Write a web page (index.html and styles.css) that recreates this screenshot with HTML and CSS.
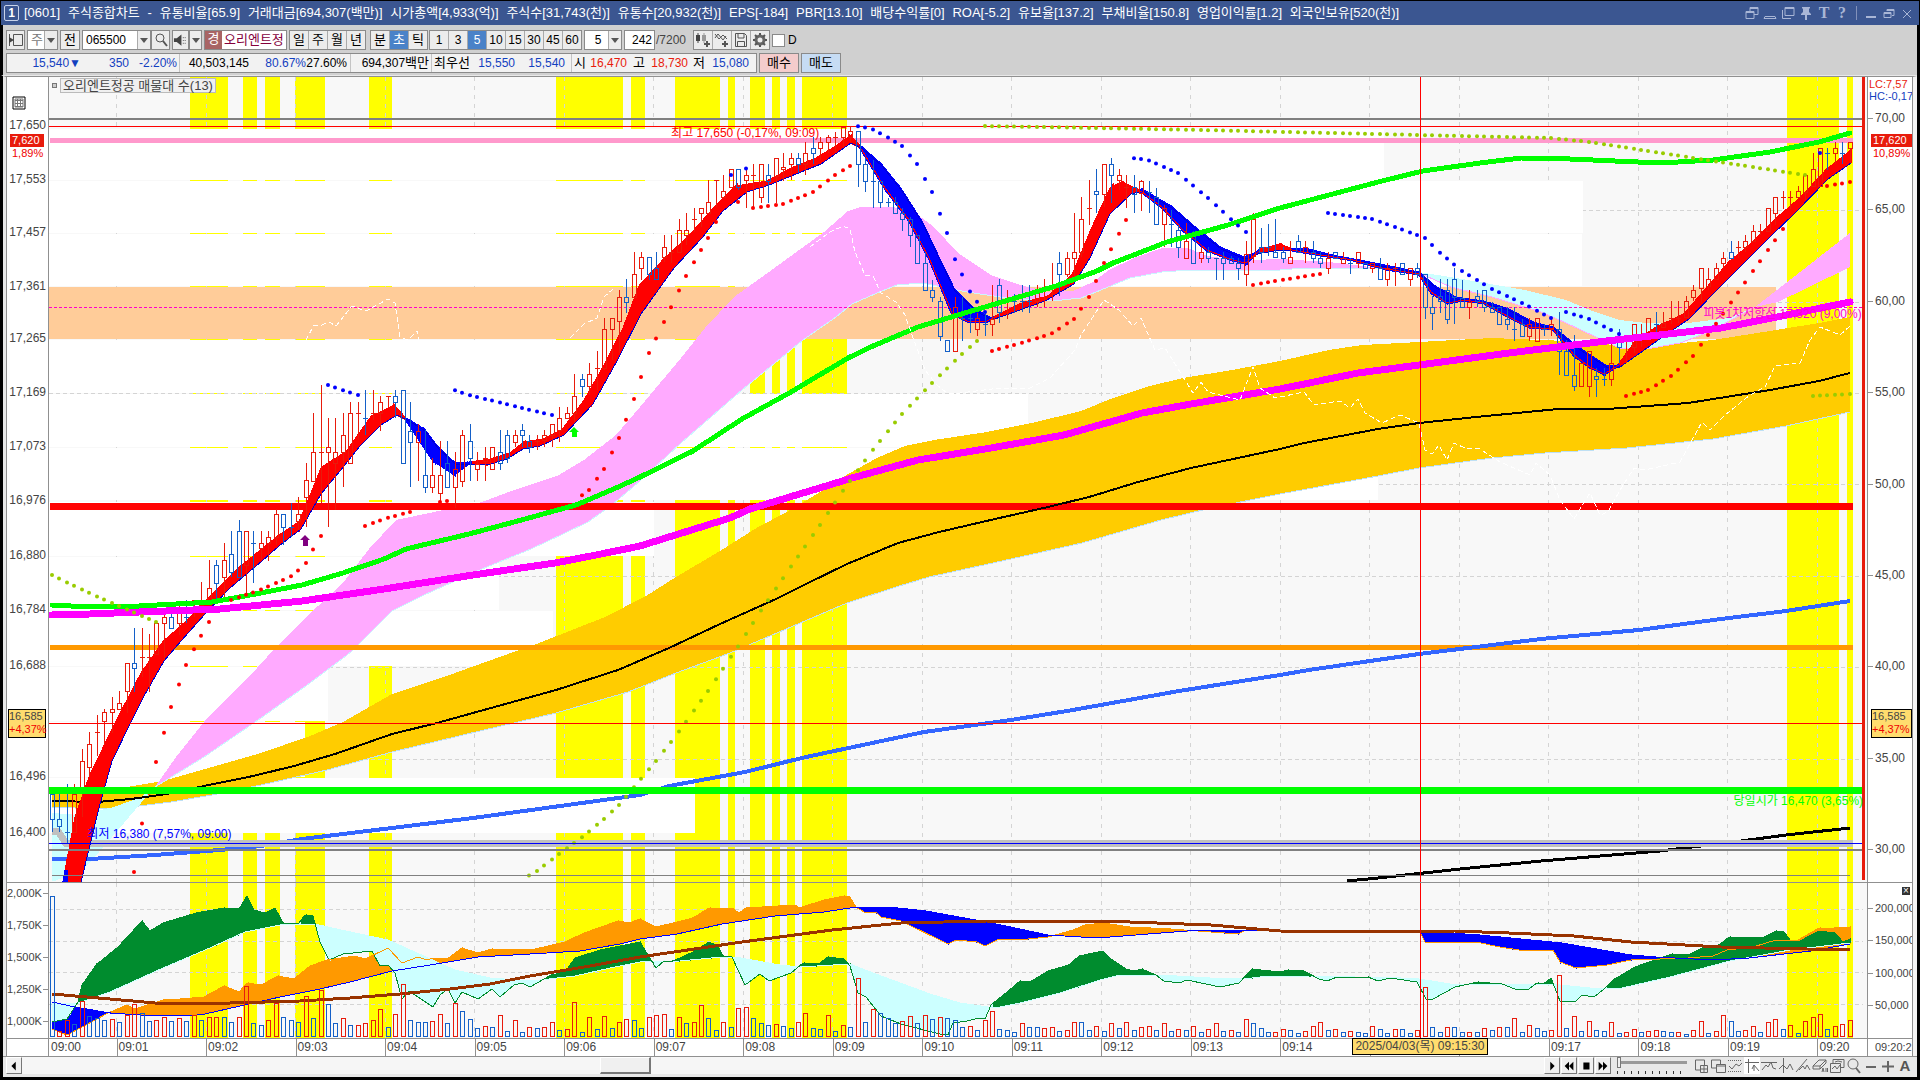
FILE: index.html
```html
<!DOCTYPE html>
<html lang="ko">
<head>
<meta charset="utf-8">
<title>[0601] 주식종합차트</title>
<link rel="stylesheet" href="styles.css">
</head>
<body>
<div class="window">
  <header class="titlebar">
    <span class="win-no">1</span>
    <h1 class="title"><span>[0601]</span><span>주식종합차트</span><span>-</span><span>유통비율[65.9]</span><span>거래대금[694,307(백만)]</span><span>시가총액[4,933(억)]</span><span>주식수[31,743(천)]</span><span>유통수[20,932(천)]</span><span>EPS[-184]</span><span>PBR[13.10]</span><span>배당수익률[0]</span><span>ROA[-5.2]</span><span>유보율[137.2]</span><span>부채비율[150.8]</span><span>영업이익률[1.2]</span><span>외국인보유[520(천)]</span></h1>
    <div class="win-tools">
      <button aria-label="화면 분리"><svg viewBox="0 0 14 14"><path d="M5 1.500h8v7H9M5 1.500V5M1 5.500h8v7H1z" /><path d="M5 2.500h8M1 6.500h8"/></svg></button>
      <button aria-label="접기"><svg viewBox="0 0 14 14"><path d="M2 10.500h10l1 2H1z"/></svg></button>
      <button aria-label="복사"><svg viewBox="0 0 14 14"><path d="M4 1.500h9v8H4zM1.500 4v8.500H10M4 2.500h9"/></svg></button>
      <button aria-label="고정"><svg viewBox="0 0 14 14"><path class="solid" d="M3 1h8v1l-1 1v3l2 2v1H8v5H6V9H2V8l2-2V3L3 2z"/></svg></button>
      <button aria-label="글자">T</button>
      <button aria-label="도움말">?</button>
      <i class="bar"></i>
      <button aria-label="최소화"><svg viewBox="0 0 14 14"><path class="solid" d="M2 10h10v2H2z"/></svg></button>
      <button aria-label="이전 크기"><svg viewBox="0 0 14 14"><path d="M5 5V3.500h7v6H10M2 6.500h7v5H2zM2 7.500h7M5 4.500h7"/></svg></button>
      <button aria-label="닫기"><svg viewBox="0 0 14 14"><path d="M3 4l8 8M11 4l-8 8"/></svg></button>
    </div>
  </header>

  <section class="toolbar">
    <form class="row">
      <button type="button" class="btn w19" aria-label="메뉴"><svg viewBox="0 0 16 16"><path d="M5.500 2.500h9v11h-9zM5.500 5v6M1.500 2v4M1.500 10v4"/><path class="solid" d="M1 5l5 3-5 3z"/></svg></button>
      <label class="combo w31 dim">주<button type="button" class="drop" aria-label="종류"></button></label>
      <button type="button" class="btn w20">전</button>
      <div class="pair">
        <div class="combo w69"><input class="code" value="065500" aria-label="종목코드"><button type="button" class="drop" aria-label="최근 종목"></button></div>
        <button type="button" class="btn w19" aria-label="검색"><svg viewBox="0 0 16 16"><circle cx="7" cy="6" r="4"/><path class="thick" d="M10 9l4 5"/></svg></button>
      </div>
      <div class="pair">
        <button type="button" class="btn w17" aria-label="소리"><svg viewBox="0 0 16 16"><path class="solid" d="M1 6h3l5-4v12L4 10H1z"/><path d="M11 5v1M11 8v1M11 11v1M13 5v1M13 8v1M13 11v1"/></svg></button>
        <button type="button" class="drop tall" aria-label="소리 설정"></button>
      </div>
      <div class="stock"><b>경</b><span>오리엔트정</span></div>
      <div class="seg gap-r"><button type="button">일</button><button type="button">주</button><button type="button">월</button><button type="button">년</button></div>
      <div class="seg"><button type="button">분</button><button type="button" class="on">초</button><button type="button">틱</button></div>
      <div class="seg num"><button type="button">1</button><button type="button">3</button><button type="button" class="on">5</button><button type="button">10</button><button type="button">15</button><button type="button">30</button><button type="button">45</button><button type="button">60</button></div>
      <div class="combo w38"><input class="mid" value="5" aria-label="간격"><button type="button" class="drop" aria-label="간격 선택"></button></div>
      <div class="pair"><div class="combo w31"><input class="end" value="242" aria-label="표시 봉수"></div><span class="total">/7200</span></div>
      <div class="seg ico">
        <button type="button" aria-label="지표 추가"><svg viewBox="0 0 16 16"><path class="solid" d="M1 3h4v6H1zM2.500 1h1v10h-1z"/><path class="pale" d="M7 3h4v6H7zM8.500 1h1v10h-1z"/><path class="thick" d="M12 9v6M9 12h6"/></svg></button>
        <button type="button" aria-label="비교"><svg viewBox="0 0 16 16"><path class="thin" d="M1 6l3-4 5 6 3-4M1 2l4 5 4-4 4 4"/><path class="thick" d="M11 9v6M8 12h6"/></svg></button>
        <button type="button" aria-label="저장"><svg viewBox="0 0 16 16"><path d="M2.500 1.500h9l2 2v11h-11zM5 2v4h6V2M4.500 14V9.500h7V14"/></svg></button>
        <button type="button" aria-label="설정"><svg viewBox="0 0 16 16"><circle class="gear" cx="8" cy="8" r="4"/><path class="thick" d="M8 1v2M8 13v2M1 8h2M13 8h2M3 3l2 2M11 11l2 2M13 3l-2 2M3 13l2-2"/></svg></button>
      </div>
      <label class="check"><input type="checkbox">D</label>
    </form>
    <div class="row">
      <div class="quote">
        <div class="cell c1"><span class="dn">15,540▼</span><span class="dn">350</span><span class="dn">-2.20%</span></div>
        <div class="cell c2"><span>40,503,145</span><span class="dn">80.67%</span><span>27.60%</span></div>
        <div class="cell c3"><span>694,307<i>백만</i></span></div>
        <div class="cell c4"><i>최우선</i><span class="dn">15,550</span><span class="dn">15,540</span></div>
        <div class="cell c5"><i>시</i><span class="up">16,470</span><i>고</i><span class="up">18,730</span><i>저</i><span class="dn">15,080</span></div>
      </div>
      <button class="order buy">매수</button>
      <button class="order sell">매도</button>
    </div>
  </section>

  <main class="chart">
    <div class="axis left price">
      <span class="lab"></span><span class="lab">17,650</span><span class="lab">17,553</span><span class="lab">17,457</span><span class="lab">17,361</span><span class="lab">17,265</span><span class="lab">17,169</span><span class="lab">17,073</span><span class="lab">16,976</span><span class="lab">16,880</span><span class="lab">16,784</span><span class="lab">16,688</span><span class="lab"></span><span class="lab">16,496</span><span class="lab">16,400</span>
      <svg class="gridicon" viewBox="0 0 14 14"><path d="M1 1h12v12H1z"/><path class="in" d="M3 4.500h8M3 7.500h8M3 10.500h8M5.500 3v8M8.500 3v8M3 3h8v8H3z"/></svg>
      <div class="tag now"><b>7,620</b><em>1,89%</em></div>
      <div class="tag cross"><b>16,585</b><em>+4,37%</em></div>
    </div>
    <div class="plot top">
      <svg id="main" viewBox="49 77 1818 805" preserveAspectRatio="none"></svg>
      <span class="legend"><i></i><b>오리엔트정공 매물대 수(13)</b></span>
      <span class="note high">최고 17,650 (-0,17%, 09:09)</span>
      <span class="note low">최저 16,380 (7,57%, 09:00)</span>
      <span class="note pivot">피봇1차저항선 17,320 (9,00%)</span>
      <span class="note open">당일시가 16,470 (3,65%)</span>
    </div>
    <div class="axis right pct">
      <span class="lab"></span><span class="lab">70,00</span><span class="lab">65,00</span><span class="lab">60,00</span><span class="lab">55,00</span><span class="lab">50,00</span><span class="lab">45,00</span><span class="lab">40,00</span><span class="lab">35,00</span><span class="lab">30,00</span>
      <div class="lchc"><span class="up">LC:7,57</span><span class="dn">HC:-0,17</span></div>
      <div class="tag now"><b>17,620</b><em>10,89%</em></div>
      <div class="tag cross"><b>16,585</b><em>+4,37%</em></div>
    </div>

    <div class="axis left vol line">
      <span class="lab"></span><span class="lab">2,000K</span><span class="lab">1,750K</span><span class="lab">1,500K</span><span class="lab">1,250K</span><span class="lab">1,000K</span>
    </div>
    <div class="plot line"><svg id="sub" viewBox="49 883 1818 155" preserveAspectRatio="none"></svg></div>
    <div class="axis right qty line">
      <span class="lab"></span><span class="lab">200,000</span><span class="lab">150,000</span><span class="lab">100,000</span><span class="lab">50,000</span>
      <button class="close" aria-label="지표 닫기">×</button>
    </div>

    <div class="axis left line"></div>
    <div class="times line">
      <span>09:00</span><span>09:01</span><span>09:02</span><span>09:03</span><span>09:04</span><span>09:05</span><span>09:06</span><span>09:07</span><span>09:08</span><span>09:09</span><span>09:10</span><span>09:11</span><span>09:12</span><span>09:13</span><span>09:14</span><span></span><span></span><span>09:17</span><span>09:18</span><span>09:19</span><span>09:20</span>
      <b class="stamp">2025/04/03(목) 09:15:30</b>
    </div>
    <div class="axis right line last">09:20:2</div>
  </main>

  <footer class="scroll">
    <button class="sb" aria-label="왼쪽으로"><svg viewBox="0 0 16 16"><path d="M10 3v10L5 8z"/></svg></button>
    <div class="track"><i class="thumb"></i></div>
    <div class="player">
      <button class="sb" aria-label="재생"><svg viewBox="0 0 16 16"><path d="M6 3v10l5-5z"/></svg></button>
      <button class="sb" aria-label="뒤로"><svg viewBox="0 0 16 16"><path d="M8 3v10L3 8zM13 3v10L8 8z"/></svg></button>
      <button class="sb" aria-label="정지"><svg viewBox="0 0 16 16"><path d="M5 4h7v8H5z"/></svg></button>
      <button class="sb" aria-label="앞으로"><svg viewBox="0 0 16 16"><path d="M3 3v10l5-5zM8 3v10l5-5z"/></svg></button>
    </div>
    <label class="speed"><input type="range" min="0" max="10" value="0" aria-label="속도"></label>
    <div class="tools">
      <button aria-label="창 추가"><svg viewBox="0 0 16 16"><path d="M8 12H2.500v-10h9v5M7.500 7.500h7v7h-7zM11 8v6M8 11h6"/></svg></button>
      <button aria-label="겹치기"><svg viewBox="0 0 16 16"><path d="M6 10H1.500v-8h9v4M6.500 6.500h9v8h-9zM6.500 8h9"/></svg></button>
      <button aria-label="구간"><svg viewBox="0 0 16 16"><path class="dot" d="M1 2.500h14M1 13.500h14"/><path d="M2 8l3 3 4-5 3 2 3-3"/></svg></button>
      <button aria-label="십자선" class="sel"><svg viewBox="0 0 16 16"><path d="M4.500 1v14M1 4.500h14M8 11l2-4 5 6M10 7v6"/></svg></button>
      <button aria-label="수평선"><svg viewBox="0 0 16 16"><path d="M0 4.500h16M1 12l4-5 2 2 3-5 2 6 3 1"/></svg></button>
      <button aria-label="수직선"><svg viewBox="0 0 16 16"><path d="M5.500 0v15M1 11l4-4 4 4 3-5 3 6"/></svg></button>
      <button aria-label="추세선"><svg viewBox="0 0 16 16"><path d="M1 14L12 1M4 12l4-4 2 3 2-4 3 5"/></svg></button>
      <button aria-label="전체 지우기"><svg viewBox="0 0 16 16"><path d="M1 8l6-6h7v3l-6 6H1zM1 8h7l6-6M8 8v3M10 14l1-4 1 4M14 10v4M15.500 10v4"/></svg></button>
      <button aria-label="차트 복사"><svg viewBox="0 0 16 16"><path d="M4 5V1.500h11v8h-3M1.500 5.500h10v9h-10zM3 11l3-3 2 3 3-4M6 4l3-1 4 1"/></svg></button>
      <button aria-label="돋보기"><svg viewBox="0 0 16 16"><circle cx="7" cy="6" r="5"/><path class="fat" d="M10 10l4 5"/></svg></button>
      <button aria-label="축소"><svg viewBox="0 0 16 16"><path class="fat" d="M3 9h10"/></svg></button>
      <button aria-label="확대"><svg viewBox="0 0 16 16"><path class="fat" d="M2 8.500h12M8 3v11"/></svg></button>
      <button aria-label="자동" class="a">A</button>
    </div>
  </footer>
</div>
<script src="chart.js"></script>
</body>
</html>
```
FILE: styles.css
```css
* { box-sizing: border-box; }
body {
  margin: 0;
  background: #000;
  color: #000;
  font: 12px/16px "Liberation Sans", "Noto Sans CJK KR", sans-serif;
}
button, input { font: inherit; color: inherit; padding: 0; margin: 0; border: 0; background: none; border-radius: 0; }
i, em { font-style: normal; }
svg { display: block; }
.up { color: #e81b0c; }
.dn { color: #1240c0; }

.window { min-height: 100vh; display: flex; flex-direction: column; padding: 1px 3px 3px 1px; }

/* title bar */
.titlebar { height: 24px; margin-right: -2px; background: #3b5691; color: #fff; display: flex; align-items: center; padding: 0 5px 0 3px; }
.win-no { width: 15px; height: 16px; border: 1px solid #c9d3ea; border-radius: 2px; font-weight: bold; line-height: 14px; text-align: center; }
.title { margin: 0 0 0 5px; width: 72%; font-weight: 400; font-size: 13px; display: flex; justify-content: space-between; white-space: nowrap; }
.win-tools { margin-left: auto; display: flex; align-items: center; gap: 4px; color: #a9b6d6; }
.win-tools button { width: 14px; font: bold 16px/16px "Liberation Serif", serif; }
.win-tools svg { width: 14px; height: 14px; fill: none; stroke: #a9b6d6; }
.win-tools .solid { fill: #a9b6d6; stroke: none; }
.win-tools .bar { width: 1px; height: 14px; margin: 0 3px; background: #8291ba; }

/* toolbar */
.toolbar { height: 51px; background: #d0d0d0; border-left: 2px solid #000; padding: 5px 0 0 3px; display: flex; flex-direction: column; gap: 3px; border-bottom: 1px solid #e8e8e8; }
.row { display: flex; height: 20px; gap: 2px; align-items: stretch; margin: 0; white-space: nowrap; font-size: 13px; }
.pair { display: flex; }
.btn, .seg, .combo, .stock { border: 1px solid #8a8a8a; background: #ececec; }
.btn { display: flex; align-items: center; justify-content: center; }
.btn svg, .ico svg { width: 16px; height: 16px; fill: none; stroke: #555; }
.btn .solid, .ico .solid { fill: #444; stroke: none; }
.ico .pale { fill: #999; stroke: none; }
.btn .thick, .ico .thick { stroke-width: 2; }
.ico .gear { stroke-width: 3; stroke: #666; }
.w17 { width: 17px; } .w19 { width: 19px; } .w20 { width: 20px; } .w31 { width: 31px; } .w38 { width: 38px; } .w69 { width: 69px; }
.combo { background: #fff; display: flex; align-items: center; padding-left: 3px; }
.combo input { flex: 1; min-width: 0; width: 10px; font-size: 12px; outline: 0; }
.combo input.mid { text-align: center; }
.combo input.end { text-align: right; padding-right: 2px; }
.dim { color: #777; }
.drop { width: 13px; height: 18px; margin-left: auto; background: #ececec; border-left: 1px solid #aaa; display: flex; align-items: center; justify-content: center; flex: none; }
.drop::before { content: ""; border: 4px solid transparent; border-top: 5px solid #555; border-bottom: 0; }
.drop.tall { height: 20px; border: 1px solid #8a8a8a; }
.stock { width: 83px; display: flex; background: #fff; color: #85003c; align-items: center; overflow: hidden; }
.stock b { width: 17px; height: 18px; background: #a86464; color: #fff; font-weight: 400; text-align: center; margin-right: 2px; flex: none; }
.seg { display: flex; }
.seg button { width: 19px; border-left: 1px solid #aaa; display: flex; align-items: center; justify-content: center; }
.seg button:first-child { border-left: 0; width: 18px; }
.seg .on { background: #4a82c8; color: #fff; }
.gap-r { margin-right: 2px; }
.num { font-size: 12px; margin-left: -1px; }
.total { width: 36px; line-height: 20px; font-size: 12px; color: #444; padding-left: 1px; }
.check { display: flex; align-items: center; gap: 3px; font-size: 12px; }
.check input { appearance: none; width: 13px; height: 13px; background: #fff; border: 1px solid #8a8a8a; }

.quote { width: 751px; border: 1px solid #8a8a8a; background: #f2f2f2; display: flex; font-size: 12px; line-height: 18px; }
.quote i { font-size: 13px; }
.cell { display: grid; border-left: 1px solid #c4c4c4; justify-items: end; }
.cell:first-child { border-left: 0; }
.c1 { grid-template-columns: 74px 48px 48px; width: 172px; }
.c2 { grid-template-columns: 69px 57px 41px; width: 171px; }
.c3 { grid-template-columns: 78px; width: 81px; }
.c4 { grid-template-columns: 38px 45px 50px; width: 140px; }
.c5 { grid-template-columns: 14px 41px 18px 43px 17px 44px; width: 184px; }
.order { width: 40px; border: 1px solid #8a8a8a; }
.buy { background: #f4cccc; }
.sell { background: #c6dcf4; }

/* chart */
.chart { flex: 1; margin-left: 2px; border-left: 3px solid #e8e8e8; border-right: 4px solid #f4f4f4; border-top: 1px solid #909090; display: grid; grid-template-columns: 43px minmax(0, 1fr) 46px; grid-template-rows: 805fr 156fr 18px; background: #fff; color: #444; }
.plot { position: relative; min-height: 0; }
.plot svg { position: absolute; inset: 0; width: 100%; height: 100%; }
.line { border-top: 1px solid #909090; }
.axis { position: relative; display: grid; overflow: hidden; min-height: 0; }
.left { border-left: 1px solid #909090; border-right: 1px solid #909090; }
.right { border-left: 1px solid #909090; border-right: 1px solid #909090; }
.lab { height: 16px; margin-top: -9px; }
.left .lab { text-align: right; padding-right: 2px; }
.right .lab { padding-left: 7px; position: relative; }
.right .lab::before { content: ""; position: absolute; left: 0; top: 8px; width: 5px; height: 1px; background: #909090; }
.right .lab:first-child::before { display: none; }
.price { grid-template-rows: 49fr 54fr 53fr 54fr 52fr 54fr 54fr 54fr 55fr 54fr 56fr 55fr 56fr 56fr 49fr; }
.pct { grid-template-rows: 210fr repeat(8, 457fr) 159fr; }
.vol { grid-template-rows: 11fr repeat(4, 32fr) 16fr; font-size: 11px; }
.vol .lab { padding-right: 7px; position: relative; }
.vol .lab::before { content: ""; position: absolute; right: 0; top: 8px; width: 6px; height: 1px; background: #909090; }
.vol .lab:first-child::before { display: none; }
.qty { grid-template-rows: 26fr repeat(4, 32fr); font-size: 11px; }
.gridicon { position: absolute; left: 5px; top: 19px; width: 14px; height: 14px; fill: none; stroke: #000; stroke-width: 1; }
.gridicon .in { stroke: #777; }
.tag { position: absolute; font-size: 11px; line-height: 13px; }
.tag b, .tag em { display: block; font-weight: 400; padding-left: 2px; }
.tag em { color: #f00000; }
.now { top: 7%; margin-top: 1px; left: 3px; width: 34px; }
.right .now { width: 41px; }
.now b { background: #e81b0c; color: #fff; }
.cross { top: 79%; margin-top: -4px; left: 1px; width: 38px; height: 29px; border: 1px solid #000; background: #ffdc6e; }
.right .cross { left: 3px; width: 41px; }
.cross b, .cross em { padding-left: 0; }
.lchc { position: absolute; left: 1px; top: 1px; line-height: 12px; display: grid; font-size: 11px; }
.close { position: absolute; right: 2px; top: 4px; width: 8px; height: 8px; background: #333; color: #fff; font-size: 10px; line-height: 8px; }

.legend { position: absolute; left: 3px; top: 1px; display: flex; align-items: center; gap: 3px; }
.legend i { width: 5px; height: 5px; border: 1px solid #777; background: #ccc; }
.legend b { font-weight: 400; font-size: 13px; line-height: 13px; padding: 0 2px; background: #f0f0f0; border: 1px solid #bbb; }
.note { position: absolute; white-space: nowrap; }
.high { left: 34%; margin-left: 4px; top: 6%; color: #f00; }
.low { left: 2%; margin-left: 2px; top: 93%; color: #00f; }
.pivot { left: 91%; top: 28%; margin-top: 4px; color: #f0c; }
.open { left: 92%; margin-left: 12px; top: 89%; color: #0f0; }

.times { position: relative; display: grid; grid-template-columns: 135fr repeat(19, 179fr) 99fr; line-height: 16px; }
.times span { border-left: 1px solid #909090; padding-left: 1px; min-width: 0; }
.times span:first-child { border: 0; padding-left: 2px; }
.stamp { position: absolute; left: 72%; margin-left: -6px; top: -1px; height: 17px; width: 136px; border: 1px solid #000; background: #ffdc6e; font-weight: 400; line-height: 15px; text-align: center; white-space: nowrap; }
.last { padding-left: 7px; white-space: nowrap; font-size: 11px; }

/* bottom strip */
.scroll { height: 21px; margin-left: 2px; padding: 0 4px 3px 3px; background: #e8e8e8; border-top: 1px solid #909090; display: flex; }
.sb { width: 16px; height: 17px; background: #f0f0f0; border: 1px solid #fff; border-right-color: #777; border-bottom-color: #777; flex: none; }
.sb svg { width: 14px; height: 14px; }
.track { flex: 1; background: #f6f6f6; display: flex; }
.thumb { margin-left: 38%; width: 51px; background: #f0f0f0; border: 1px solid #fff; border-right: 2px solid #777; border-bottom: 2px solid #777; }
.player { display: flex; gap: 1px; }
.speed { width: 70px; margin: 0 6px; padding-bottom: 3px; background: repeating-linear-gradient(90deg, #333 0 1px, transparent 1px 7px) 0 100% / 100% 3px no-repeat; }
.speed input { appearance: none; width: 70px; height: 3px; margin: 4px 0 0; background: #999; display: block; }
.speed input::-webkit-slider-thumb { appearance: none; width: 4px; height: 11px; background: #f0f0f0; border: 1px solid #777; }
.tools { display: flex; gap: 1px; }
.tools button { width: 16px; height: 17px; }
.tools svg { width: 16px; height: 16px; fill: none; stroke: #666; }
.tools .fat { stroke-width: 2; }
.tools .dot { stroke-dasharray: 1 1; }
.tools .sel { background: #fff; }
.tools .a { font-weight: bold; font-size: 15px; line-height: 17px; color: #555; }
```
FILE: chart.js
```js
const NS = 'http://www.w3.org/2000/svg';
const X = i => Math.round(52 + 7.46 * i);
const el = (p, tag, a) => { const n = document.createElementNS(NS, tag); for (const k in a) n.setAttribute(k, a[k]); p.appendChild(n); return n; };
const pts = s => s.trim().split(/\s+/).map(p => p.split(',').map(Number));
const line = (p, s, stroke, w, extra) => el(p, 'polyline', { points: s.trim(), fill: 'none', stroke, 'stroke-width': w, 'stroke-linejoin': 'round', 'shape-rendering': 'crispEdges', ...extra });
const box = (p, x, y, w, h, fill) => el(p, 'rect', { x, y, width: w, height: h, fill });
const at = (P, x) => {
  if (x <= P[0][0]) return P[0][1];
  for (let k = 1; k < P.length; k++) if (x <= P[k][0]) {
    const [a, b] = P[k - 1], [c, d] = P[k];
    return b + (d - b) * (x - a) / (c - a);
  }
  return P[P.length - 1][1];
};
const band = (p, top, bottom, fill) => el(p, 'polygon', { points: top.trim() + ' ' + bottom.trim().split(/\s+/).reverse().join(' '), fill, 'shape-rendering': 'crispEdges' });
const dots = (p, run, fill) => {
  const P = pts(run), x1 = P[P.length - 1][0];
  for (let i = 0; i < 242; i++) { const x = X(i); if (x >= P[0][0] - 3 && x <= x1 + 3) el(p, 'circle', { cx: x, cy: at(P, x), r: 2, fill }); }
};
/* area between a fast and a slow line, coloured by which one is on top */
const ribbon = (p, fast, slow, up, down, edge) => {
  const F = pts(fast), S = pts(slow), path = { [up]: '', [down]: '' };
  for (let x = F[0][0]; x < 1850; x += 2) {
    const f0 = at(F, x), s0 = at(S, x), f1 = at(F, x + 2), s1 = at(S, x + 2);
    path[f0 < s0 ? up : down] += `M${x} ${f0}L${x + 2} ${f1}L${x + 2} ${s1}L${x} ${s0}z`;
  }
  for (const c in path) el(p, 'path', { d: path[c], fill: c, stroke: c, 'stroke-width': edge, 'shape-rendering': 'crispEdges' });
};

const signals = [[190, 228], [243, 257], [265, 280], [295, 325], [369, 392], [556, 623], [631, 645], [675, 720], [728, 735], [750, 765], [772, 780], [787, 795], [802, 847], [1787, 1839], [1847, 1853]];
const backdrop = (p, y0, h, rows) => {
  box(p, 49, y0, 1818, h, '#f8f8f8');
  for (const [a, b] of signals) box(p, a, y0, b - a, h, '#ffff00');
  for (let k = 0; k < 20; k++) { const x = Math.round(116 + k * 89.5) + 0.5; line(p, `${x},${y0} ${x},${y0 + h}`, '#d4d4d4', 1, { 'stroke-dasharray': '4 5' }); }
  for (const y of rows) line(p, `49,${y} 1863,${y}`, '#d4d4d4', 1, { 'stroke-dasharray': '4 3' });
};

const m = document.getElementById('main');
backdrop(m, 77, 805, [210.5, 302.5, 393.5, 484.5, 576.5, 667.5, 759.5]);
[[129, 180, 1384], [181, 233, 1583], [234, 286, 1582], [340, 393, 720], [394, 447, 1028], [448, 500, 1378], [502, 556, 654], [557, 610, 499], [611, 666, 553], [667, 721, 328], [722, 777, 305], [778, 833, 695]]
  .forEach(([a, b, x]) => box(m, 49, a, x - 49, b - a, '#ffffff'));
box(m, 49, 287, 1727, 52, '#ffcc99');

const goldLow = '52,807 98,809 139,806 171,802 212,795 261,785 327,770 392,752 480,731 556,713 628,692 676,673 730,653 847,603 896,587 929,577 1011,559 1082,543 1161,520 1211,508 1280,494 1378,476 1419,468 1492,458 1545,453 1627,448 1713,439 1786,426 1850,412';
band(m, '52,794 127,787 163,781 212,767 261,753 310,736 343,722 392,694 441,678 480,664 539,643 605,617 646,596 676,577 720,551 758,527 787,512 820,492 848,474 877,458 905,446 934,440 987,432 1032,423 1081,411 1113,398 1150,386 1183,378 1232,370 1280,361 1329,350 1362,345 1419,342 1492,338 1566,341 1639,347 1713,340 1776,330 1819,323 1850,317', goldLow, '#ffcc00');
line(m, goldLow, '#bfe0f4', 1);

band(m, '52,813 78,815 114,807 141,797 155,787', '52,881 55,881 86,867 118,830 141,803 155,787', '#ccffff');
const pinkLow = '155,787 204,757 261,718 310,683 351,652 392,611 424,595 482,569 531,549 563,534 588,522 612,505 640,481 681,443 742,390 803,340 836,317 852,304 877,293 897,285 922,283 942,287 967,292 1007,298 1052,301 1081,298 1101,290 1130,278 1162,272 1191,270 1280,270 1304,268 1378,268 1419,273';
band(m, '155,787 176,757 204,722 237,688 257,668 278,645 306,617 343,583 369,549 396,520 453,508 482,502 506,493 559,475 584,460 616,435 640,407 681,358 705,328 734,297 762,277 824,232 848,211 860,207 893,207 918,215 934,227 958,253 991,275 1020,285 1048,292 1073,291 1093,282 1109,270 1134,258 1162,248 1187,248 1211,257 1252,260 1280,259 1329,262 1378,268 1419,273', pinkLow, '#ffaaff');
line(m, pinkLow, '#ccf4ff', 1);
const cyanLow = '1419,273 1451,287 1492,297 1541,312 1566,323 1598,338 1619,348 1647,349 1680,343 1709,332 1755,307';
band(m, '1419,272 1456,278 1525,290 1566,300 1590,310 1619,320 1647,323 1688,323 1729,318 1755,307', cyanLow, '#ccffff');
line(m, cyanLow, '#ffaaff', 1);
band(m, '1755,307 1786,283 1850,233', '1755,307 1778,302 1807,288 1850,267', '#ffaaff');

[['49,307.5 1863,307.5', '#ff00cc', 1, { 'stroke-dasharray': '3 2' }], ['49,119 1863,119', '#808080', 2], ['49,126.5 1863,126.5', '#ff0000', 1], ['50,140.5 1853,140.5', '#ff99cc', 5], ['50,506.500 1853,506.500', '#ff0000', 7], ['50,647.5 1853,647.5', '#ff9900', 5]].forEach(a => line(m, ...a));

line(m, '52,801 98,802 131,799 167,794 204,786 253,776 294,766 335,754 392,734 437,723 480,711 556,690 618,670 669,648 720,624 776,599 806,584 847,564 898,543 939,532 995,519 1048,507 1089,497 1138,482 1191,468 1280,449 1304,443 1378,429 1419,423 1476,417 1558,409 1607,409 1688,403 1770,390 1819,381 1850,373', '#000', 2);
line(m, '52,859 90,859 155,855 220,850 261,846 302,839 392,828 473,818 640,795 669,786 745,772 806,757 858,746 924,732 1011,720 1067,711 1179,691 1280,675 1309,670 1370,661 1419,654 1484,646 1541,639 1639,630 1721,619 1786,611 1850,601', '#3366ff', 4);
line(m, '1347,881 1378,878 1460,869 1541,861 1660,851 1741,841 1786,835 1850,828', '#000', 3);
line(m, '52,831 58,831 66,843.5 1853,843.5', '#c0c0c0', 7);

const fast = '64,881 76,817 90,777 114,727 141,675 163,643 192,617 208,600 241,567 278,537 300,522 310,498 322,468 347,452 371,418 394,406 408,422 433,460 454,474 469,463 490,460 510,454 524,443 543,440 563,430 584,402 604,367 624,328 640,286 664,260 689,237 713,210 736,187 767,182 791,169 816,159 836,147 850,137 860,147 885,188 909,220 930,260 952,313 967,321 987,321 1003,313 1024,303 1048,297 1073,275 1093,227 1111,188 1122,183 1142,192 1162,207 1183,230 1207,250 1232,260 1246,263 1260,250 1280,245 1292,250 1321,255 1353,260 1386,269 1419,274 1431,292 1447,303 1464,300 1484,303 1509,317 1529,327 1553,329 1574,355 1590,367 1604,374 1619,365 1635,343 1656,328 1684,315 1704,292 1729,263 1753,243 1778,218 1802,197 1827,170 1850,152';
const slow = '80,881 98,807 111,760 129,723 143,695 163,660 180,640 204,613 229,587 261,560 278,545 300,528 320,493 339,470 359,445 380,424 396,414 408,420 424,430 437,447 454,463 469,463 486,464 506,458 522,448 539,445 563,434 592,403 616,360 640,313 673,267 701,237 722,210 746,191 771,183 795,173 820,163 840,149 850,142 862,148 881,165 901,190 922,223 938,257 954,290 975,310 991,319 1016,310 1044,300 1073,283 1089,257 1109,213 1130,193 1142,190 1171,207 1195,228 1220,248 1244,258 1260,252 1280,249 1309,250 1333,256 1370,263 1419,273 1435,287 1456,298 1484,302 1509,310 1533,323 1553,328 1578,348 1607,367 1619,366 1639,352 1660,337 1688,318 1713,292 1737,268 1770,235 1794,212 1827,178 1850,162';
ribbon(m, fast, slow, '#ff0000', '#0000ff', 3);
line(m, slow, '#0000d0', 1, { transform: 'translate(1 1)' });
line(m, fast.split(' ').slice(37).join(' '), '#ff0000', 1);

/* candles: colour, high, body top, body bottom, low */
const candles = {
0: 'b793,794,819,832 b794,819,826,832 b784,832,832,843 r784,794,832,832 r749,761,788,817 r732,744,767,777 r715,732,732,756 r709,712,721,745 r697,709,712,733 r691,703,709,709 r663,663,691,713 b628,663,668,692 r628,657,657,677 r634,657,657,692 r623,623,654,655 r611,617,623,660 b605,617,628,628 r605,611,623,635 b600,617,617,623 r600,600,600,617 r582,600,605,610 r560,588,600,603 b560,565,583,600 r543,560,577,600 b531,554,572,577 b520,531,577,577 r531,531,565,595 b531,543,543,583 r531,543,548,560 r531,537,543,561 r509,514,537,545 b514,514,527,545 b503,527,527,537 r497,514,521,530 r463,480,497,527 r413,452,481,481 r385,452,452,503 r418,447,452,527 r418,452,463,510 r413,435,452,487 r402,413,463,463 r402,413,413,440 b390,418,418,435 r390,413,413,420 r396,402,413,431 r396,396,396,407 b390,396,402,418 b390,390,463,463 b402,431,442,487 r424,431,442,481 b430,475,487,493 r458,475,487,493 r441,475,493,503 b441,463,487,487 r452,469,487,508 r430,435,481,487 b424,441,458,481 r452,464,469,481 r447,458,461,481 r447,447,469,469 b430,452,463,470 b430,435,458,463 r430,435,442,447 b424,430,435,447 b435,441,447,453 r435,441,441,450 r430,435,440,447 r424,424,435,447 r407,418,430,442 r407,413,418,418 r374,396,413,423 b374,379,386,397 r363,374,386,395 r351,368,368,390 r318,329,368,370 r318,318,329,360 r290,297,321,353 b279,297,302,313 r252,274,297,297',
79: 'r252,257,268,280 b257,257,274,280 b252,268,279,279 r235,247,257,262 r235,252,252,263 r219,230,252,252 r213,230,235,245 r208,219,219,232 r208,208,213,227 r180,202,213,213 r180,180,180,207 r175,191,197,197 r169,169,187,187 b169,169,187,190 r168,175,180,208 r164,175,175,207 r164,164,197,203 b164,175,181,203 r158,158,176,203 r153,167,169,181 r153,158,164,180 b153,158,164,173 r142,153,164,175 b137,148,153,164 r137,142,148,160 r135,137,142,153 r132,137,137,152 r127,127,137,147 r126,131,137,142 b131,131,164,187 b158,164,181,192 b160,181,181,208 b181,181,202,208 b198,202,202,207 b197,202,213,213 b208,213,219,231 b217,219,235,247 b235,235,263,263 b252,263,290,290 b280,290,297,302 b297,301,336,341 b340,340,351,351 r297,307,351,351 b297,318,318,341 b307,318,318,333 r313,318,329,336 b313,324,324,336 r285,319,324,336 b279,285,312,323 r290,299,301,319 b294,301,301,313 b285,301,301,312 b285,301,301,313 r285,290,301,307 r279,290,290,307 r263,286,286,301',
135: 'b252,263,274,296 r252,258,274,277 r213,252,258,277 r197,219,252,257 r180,208,208,225 b169,191,194,213 r164,164,194,207 b158,164,175,203 r169,175,180,190 r175,187,187,208 b175,187,194,213 r180,181,193,211 b181,192,192,213 b188,197,224,224 r205,208,224,247 b210,224,224,247 b225,230,247,258 r223,241,258,258 b231,236,263,263 r247,252,258,263 b247,252,258,263 b258,258,258,280 b252,258,263,280 b256,258,263,263 b258,263,268,280 r241,254,274,286 r213,219,256,263 b228,247,252,263 b224,247,247,256 b219,252,257,257',
165: 'b247,252,258,263 r241,257,263,263 b235,241,252,252 r241,247,252,263 b241,252,258,263 b252,258,263,268 r252,258,268,274 b252,252,258,258 r252,258,263,263 b258,263,263,274 r252,252,263,268 b263,263,268,268 r263,263,268,273 b258,268,279,279 r263,268,279,286 r263,268,268,286 b263,263,274,274 r268,268,279,286 b263,268,274,278 b274,274,307,319 b296,307,313,330 b279,296,301,313 b279,290,319,324 b268,279,297,324 b280,298,307,307 r290,302,307,319 b290,296,301,307 b290,290,307,312 b302,307,312,312 b307,307,324,324 b307,319,324,330 b307,329,329,341 b319,324,336,336 r318,324,336,341 r318,318,341,341 b324,329,329,336 r319,324,329,336 b312,329,351,375 b340,351,375,375 b335,375,386,391 r363,363,386,386 r351,351,386,397 b368,376,379,397 b368,379,379,386 r340,363,379,386 b329,340,347,363 r336,336,336,363 r324,324,347,353 r324,336,336,347 r318,318,335,340 b312,324,324,336 r312,323,327,327 r301,318,318,324 r301,318,318,323 r296,301,317,317 r285,290,297,301 r268,268,288,303 r268,279,286,290 r263,268,279,279 r252,258,263,268 b241,252,258,258 r241,247,247,258 r235,241,247,252 r225,231,241,241 r224,231,231,235 r208,208,231,231 r197,197,213,225 r191,197,197,209 r191,197,197,209 r186,191,197,198 r175,175,192,200 r153,169,186,186 r148,148,186,186 b148,153,153,170 r142,148,153,164 b142,153,153,164 r142,142,148,163'
};
const RED = '#e81b0c', BLUE = '#1460c8';
for (const start in candles) candles[start].split(' ').forEach((c, k) => {
  const x = X(+start + k), col = c[0] === 'r' ? RED : BLUE, [h, t, b, l] = c.slice(1).split(',').map(Number);
  let d = `M${x + .5} ${h}V${t}M${x + .5} ${b}V${l}`;
  d += t === b ? `M${x - 2} ${t + .5}h5` : `M${x - 1.5} ${t + .5}h4V${b + .5}h-4z`;
  el(m, 'path', { d, stroke: col, fill: 'none', 'stroke-width': 1, 'shape-rendering': 'crispEdges' });
});

line(m, '52,615 90,614 139,612 220,609 302,601 384,589 473,575 555,563 596,555 640,546 669,537 730,518 750,509 836,483 852,478 918,460 991,448 1064,435 1142,413 1191,404 1280,389 1358,373 1419,365 1509,353 1598,342 1721,328 1782,316 1850,302', '#ff00ff', 7, { 'stroke-linecap': 'round' });
line(m, '52,605 71,606 139,606 176,604 212,602 245,596 302,585 343,573 384,559 406,549 469,534 514,522 576,505 616,488 640,477 693,451 742,419 791,392 848,358 873,346 918,327 958,315 1056,286 1097,271 1113,263 1167,242 1228,225 1280,208 1382,181 1423,171 1480,163 1521,158 1570,159 1660,163 1713,160 1770,152 1819,142 1850,133', '#00ff00', 5, { 'stroke-linecap': 'round' });

['328,385 357,395', '454,390 469,395 514,406 551,415', '731,175 733,175', '745,169 747,168', '857,126 872,129 887,137 902,146 917,164 932,192 947,233 954,257 969,290 984,312', '1133,158 1148,160 1178,173 1208,198 1245,232', '1328,213 1372,219 1395,227 1425,238 1439,252 1462,271 1492,289 1522,303 1551,318', '1566,312 1589,319 1619,334', '1820,153 1821,153'].forEach(r => dots(m, r, '#0000ff'));
['134,872 141,828 156,762 171,707 186,665 208,622', '231,600 260,590 290,577 305,565 320,536', '365,526 387,518 410,512', '440,502 447,501', '581,496 589,490 604,469 619,438 634,399 648,355 663,324 686,276 708,238 716,222', '736,203 738,202', '753,208 783,204 813,192 835,175 850,166', '992,351 1021,343 1051,334 1074,319 1089,297 1103,265 1126,220', '1253,285 1275,281 1320,274', '1626,396 1648,390 1671,376 1693,356 1708,335 1730,304 1753,271 1783,229', '1827,186 1850,182'].forEach(r => dots(m, r, '#ff0000'));
['52,575 66,582 96,596 156,622', '528,876 537,871 559,854 581,838 604,819 619,805 656,761 678,733 708,691 739,645 760,612 790,568 820,525 842,492 872,451 901,415 932,383 962,354 977,341', '984,126 1043,127 1200,130 1419,135 1550,138 1590,142 1700,159 1805,175', '1813,396 1850,394'].forEach(r => dots(m, r, '#99cc00'));

const dash = { 'stroke-dasharray': '5 3' };
line(m, '306,340 314,325 322,325 329,322 336,326 352,306 366,311 388,299 395,303 400,337 408,340 417,331 419,340', '#fff', 1, dash);
line(m, '570,338 584,324 597,318 604,297 613,289', '#fff', 1, dash);
line(m, '810,247 830,232 843,226 850,229 855,252 865,275 873,276 881,293 896,302 905,315 912,335 925,370 937,385 947,393 960,393 1000,388 1030,388 1050,378 1075,350 1081,335 1104,300 1119,310 1133,326 1141,318 1155,350 1165,348 1180,372 1193,393 1201,382 1208,392 1240,400 1253,367 1260,388 1275,398 1304,392 1314,405 1340,401 1350,408 1358,399 1365,413 1382,423 1400,415 1419,423 1425,450 1432,454 1439,445 1447,460 1454,443 1465,448 1480,449 1500,462 1530,475 1536,463 1550,475 1560,500 1574,519 1590,493 1600,515 1608,512 1620,490 1634,468 1645,470 1680,462 1702,422 1710,430 1725,415 1750,395 1765,387 1775,366 1800,363 1810,340 1820,327 1840,335 1850,326', '#fff', 1, dash);

line(m, '49,790.5 1863,790.5', '#00ff00', 7);
line(m, '49,843.5 1863,843.5', '#0000ff', 1);
line(m, '49,850 1863,850', '#808080', 2);
line(m, '52,875.5 1850,875.5', '#808080', 1);
el(m, 'path', { d: 'M305 535l5 5h-2v6h-5v-6h-3z', fill: '#800080' });
el(m, 'path', { d: 'M574 427l5 5h-2v5h-5v-5h-3z', fill: '#00ff00' });
line(m, '49,723.5 1863,723.5', '#ff0000', 1);
line(m, '1420.5,77 1420.5,882', '#ff0000', 1);
box(m, 1862, 77, 3, 803, '#e81b0c');

/* lower pane */
const s = document.getElementById('sub');
backdrop(s, 883, 155, [909.5, 941.5, 972.5, 1004.5]);
const G = '52,1022 67,1019 78,1002 82,985 96,965 118,947 142,921 150,931 163,923 196,913 224,908 239,909 247,896 254,910 265,913 275,908 283,923 298,924 305,915 313,916 320,942 329,960 343,954 372,951 380,966 388,965 395,973 402,999 409,991 433,1007 440,995 448,989 455,1003 462,992 478,999 492,989 500,997 514,985 522,983 530,987 551,975 565,972 575,958 600,950 620,946 640,942 648,955 656,968 664,961 673,961 693,952 709,942 718,946 723,956 732,957 745,985 760,974 769,981 791,973 803,963 820,963 828,957 844,959 850,966 858,993 866,997 881,1016 901,1024 940,1034 948,1035 953,1023 967,1021 979,1018 985,1019 991,1005 1007,992 1020,981 1030,982 1048,971 1069,965 1079,956 1103,951 1111,959 1126,969 1134,971 1142,969 1156,975 1164,981 1179,983 1187,980 1220,987 1239,983 1252,969 1280,972 1288,970 1304,971 1319,979 1327,981 1337,977 1353,978 1368,977 1378,981 1390,978 1417,982 1426,999 1433,999 1455,987 1478,982 1502,984 1515,989 1529,989 1537,983 1545,983 1551,978 1560,1001 1575,1002 1582,995 1594,997 1604,989 1613,980 1635,967 1660,958 1672,954 1688,955 1702,948 1719,945 1729,937 1762,938 1776,931 1784,932 1790,940 1798,942 1819,931 1835,933 1843,942 1850,939';
const C = '52,1003 78,1003 110,992 163,968 212,947 245,932 285,924 315,924 332,928 388,940 455,970 490,978 531,981 575,976 610,968 640,962 680,961 722,957 735,957 780,965 800,967 850,964 865,970 930,994 960,1003 995,1008 1020,1003 1060,993 1100,980 1120,975 1160,975 1210,978 1245,979 1260,977 1310,976 1400,978 1419,979 1450,984 1520,984 1560,985 1600,989 1622,988 1670,977 1730,961 1790,950 1850,943';
const O = '52,1029 67,1035 82,1027 108,1013 127,1005 135,1009 163,1000 180,999 204,997 224,986 239,992 247,983 261,985 278,976 294,979 310,966 327,960 355,956 365,959 388,948 402,963 418,957 427,960 433,958 447,959 462,948 478,953 492,949 531,950 565,942 584,933 618,921 629,923 640,919 656,927 673,923 693,918 709,908 732,908 739,913 746,908 795,905 799,908 824,900 844,896 850,897 856,907 864,912 877,913 881,917 901,921 948,944 956,940 977,942 985,946 999,939 1028,939 1048,937 1073,930 1085,925 1103,923 1130,927 1171,929 1211,932 1238,934 1248,929 1280,930 1321,930 1419,930 1425,942 1476,942 1500,947 1525,951 1553,950 1560,962 1576,968 1607,965 1631,960 1660,959 1688,958 1713,956 1727,950 1753,947 1776,940 1798,940 1819,928 1835,928 1850,927';
const B = '52,1002 75,1007 110,1013 140,1015 190,1016 205,1014 240,1006 280,997 320,989 350,982 392,971 430,965 478,957 530,954 580,951 620,944 640,939 677,934 722,924 775,916 824,912 856,907 889,907 926,911 987,922 1048,935 1097,938 1187,931 1280,930 1419,931 1480,935 1562,943 1631,955 1656,957 1713,960 1749,958 1811,951 1850,944';
ribbon(s, O, B, '#ff9900', '#0000ff', 1);
ribbon(s, G, C, '#008c2e', '#ccffff', 1);
line(s, C, '#ccffff', 1);
line(s, G, '#008c2e', 1);
line(s, O, '#ff9900', 1);
line(s, B, '#0000ff', 1);
line(s, '52,994 110,999 155,1003 230,1003 300,1001 350,998 400,994 450,989 490,984 530,976 590,966 640,957 742,942 832,930 901,923 987,921 1048,921 1130,922 1211,925 1280,931 1362,932 1455,931 1509,933 1574,936 1631,942 1721,947 1850,950', '#993300', 3);

const volume = 'b140 r5 r16 b12 r35 b20 b18 b16 r17 b14 r21 r32 b23 b15 r16 r19 b15 r18 b15 r21 b16 r19 r19 b19 b14 r19 r50 b13 b11 r16 r33 b19 b16 b14 r40 b18 r46 b32 b13 r18 b11 r11 r13 r16 r27 b9 r22 r52 b16 b14 b14 r15 r22 b13 r33 b25 b17 b8 r10 b9 r21 b5 r16 b4 r9 b8 r9 r14 b6 r7 r34 b4 r19 b7 r20 b8 r14 r17 b16 b8 r19 r21 r22 b7 r19 b13 r14 r31 b18 b6 r14 b9 r28 r29 b18 b13 b11 r12 b10 b8 r14 r23 b8 b7 r21 b5 r11 b9 r58 b14 r27 b23 b18 b13 r15 r20 b13 r21 b17 r19 b18 b16 b9 r10 b6 r16 r25 b7 b6 b4 r13 b9 b9 r8 r9 b5 r6 r14 b14 b6 r10 b5 r13 b8 r14 b6 r9 r10 b6 r13 b5 r7 b6 r10 b4 r7 r13 b5 r6 b4 r17 b13 b8 b4 r4 r7 b6 b3 r5 r10 r14 b6 r7 b4 r5 b4 b3 r10 b7 b3 r7 b7 b3 r6 r49 b9 b4 r9 b9 b4 r4 b4 r8 b6 r9 b9 r18 b4 r11 b8 b5 r6 r61 b8 r20 b5 r15 b6 b5 r14 b3 r4 r7 b4 r5 r6 b5 b4 r4 b2 r6 r15 b3 r5 r21 b15 b5 r6 r10 b4 r14 r17 b7 r11 b3 r15 r19 r22 b7 r10 r12 r16'.split(' ');
volume.forEach((v, i) => el(s, 'rect', { x: X(i) - 1.5, y: 1036.5 - v.slice(1), width: 4, height: +v.slice(1), fill: 'none', stroke: v[0] === 'r' ? RED : BLUE, 'shape-rendering': 'crispEdges' }));
line(s, '1420.5,883 1420.5,1038', '#ff0000', 1);
```
